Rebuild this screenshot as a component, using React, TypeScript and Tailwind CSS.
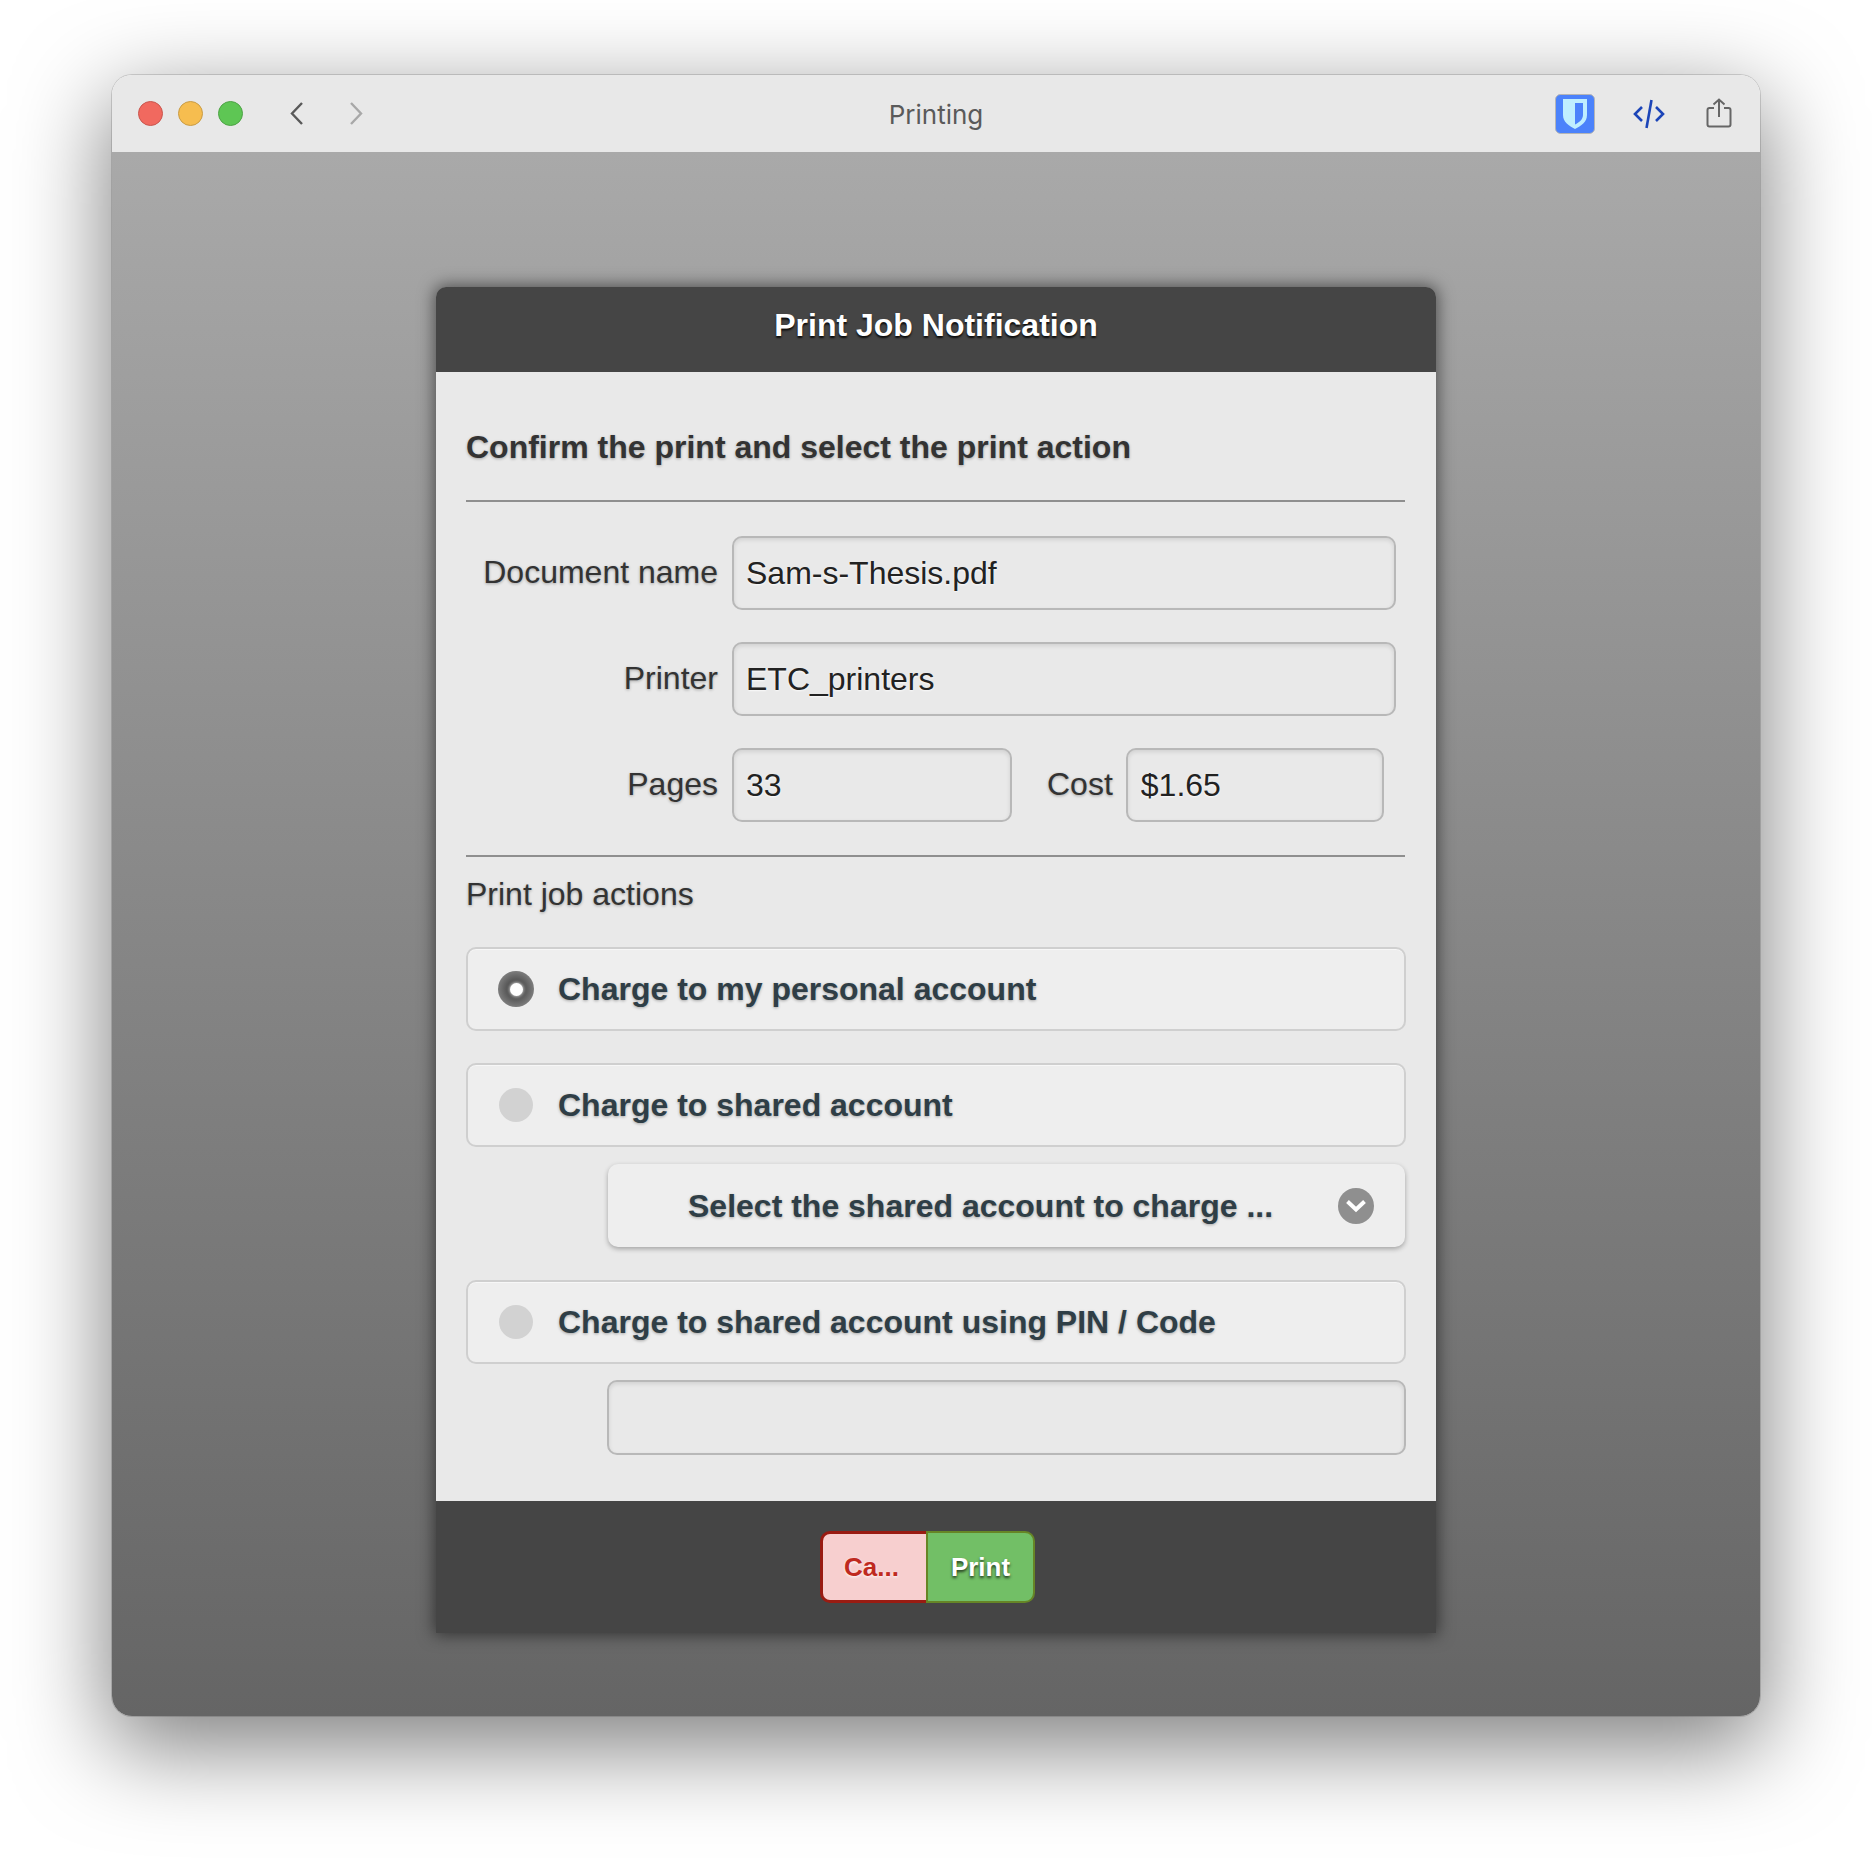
const fieldClass =
  "rounded-[10px] border-2 border-[#b8b8b8] bg-[#e9e9e9] px-3 text-[32px] text-[#222] shadow-[inset_0_2px_4px_rgba(0,0,0,0.1)] outline-none [text-shadow:0_1px_2px_rgba(255,255,255,0.8)]";

const labelShadow = "[text-shadow:0_1px_3px_rgba(0,0,0,0.3)]";

const TrafficLight = ({ color, ring }: { color: string; ring: string }) => (
  <span className={`block h-[25px] w-[25px] rounded-full border ${color} ${ring}`} />
);

const Field = ({ label, value, className }: { label: string; value: string; className: string }) => (
  <input readOnly aria-label={label} value={value} className={`${fieldClass} h-[74px] ${className}`} />
);

const ActionRow = ({ label, checked }: { label: string; checked?: boolean }) => (
  <div className="flex h-[84px] items-center rounded-[10px] border-2 border-[#cfcfcf] bg-[#eeeeee] pl-[30px] shadow-[inset_0_1px_0_rgba(255,255,255,0.5)]">
    {checked ? (
      <span className="flex h-9 w-9 items-center justify-center rounded-full bg-[radial-gradient(circle,#505050_30%,#7c7c7c_70%)]">
        <span className="h-[13px] w-[13px] rounded-full bg-white shadow-[0_0_3px_1px_rgba(255,255,255,0.6)]" />
      </span>
    ) : (
      <span className="mx-px h-[34px] w-[34px] rounded-full bg-[#d2d2d2]" />
    )}
    <span className={`ml-6 text-[32px] font-bold text-[#2f3e46] ${labelShadow}`}>{label}</span>
  </div>
);

export default function App() {
  return (
    <div className="h-[1864px] w-full overflow-hidden bg-white pl-[112px] pt-[75px] font-['Liberation_Sans',Arial,sans-serif]">
      <div className="flex h-[1641px] w-[1648px] flex-col overflow-hidden rounded-[20px] shadow-[0_28px_92px_4px_rgba(0,0,0,0.5),0_0_0_1px_rgba(0,0,0,0.14)]">
        {/* Title bar */}
        <div className="relative flex h-[77px] shrink-0 items-center bg-[#e8e8e8] pl-[26px]">
          <div className="flex gap-[15px]">
            <TrafficLight color="bg-[#f1695f]" ring="border-[#c9564e]" />
            <TrafficLight color="bg-[#f6bd4f]" ring="border-[#c99c45]" />
            <TrafficLight color="bg-[#5ec654]" ring="border-[#4ea346]" />
          </div>
          <svg className="ml-11" width="22" height="26" viewBox="0 0 22 26" fill="none" stroke="#595959" strokeWidth="2.4">
            <path d="M15 2 L5 12.5 L15 23" />
          </svg>
          <svg className="ml-9" width="22" height="26" viewBox="0 0 22 26" fill="none" stroke="#a8a8a8" strokeWidth="2.4">
            <path d="M6 2 L16 12.5 L6 23" />
          </svg>
          <span className="absolute inset-x-0 top-6 text-center font-['Inter',sans-serif] text-[26px] leading-8 text-[#5a5a5a]">
            Printing
          </span>
          <div className="ml-auto flex items-center">
            <svg width="40" height="40" viewBox="0 0 40 40">
              <rect x="0.5" y="0.5" width="39" height="39" rx="5" fill="#4b82fb" stroke="#b5b5b5" />
              <path d="M8 5 H32 V21 C32 28 26 32 20 35 C14 32 8 28 8 21 Z" fill="#bfeeff" />
              <path d="M20 9 H28 V21 C28 25.5 24 28.5 20 30.5 Z" fill="#4b82fb" />
            </svg>
            <svg className="ml-[38px]" width="32" height="30" viewBox="0 0 32 30" fill="none" stroke="#1c45b8" strokeWidth="2.6">
              <path d="M9 8 L2 15 L9 22" />
              <path d="M23 8 L30 15 L23 22" />
              <path d="M18.5 1 L13.5 29" />
            </svg>
            <svg className="-mt-0.5 ml-[41px] mr-7" width="26" height="30" viewBox="0 0 26 30" fill="none" stroke="#666" strokeWidth="2">
              <path d="M8 10 H3.5 A2 2 0 0 0 1.5 12 V26.5 A2 2 0 0 0 3.500 28.500 H22.500 A2 2 0 0 0 24.500 26.500 V12 A2 2 0 0 0 22.500 10 H18" />
              <path d="M13 19 V1.500" />
              <path d="M7.500 6.500 L13 1.500 L18.500 6.500" />
            </svg>
          </div>
        </div>

        {/* Page behind the modal */}
        <div className="flex grow justify-center bg-gradient-to-b from-[#a9a9a9] to-[#656565] pt-[135px]">
          <div className="flex h-[1346px] w-[1000px] flex-col rounded-t-[10px] shadow-[0_0_16px_2px_rgba(0,0,0,0.5)]">
            <div className="flex h-[85px] shrink-0 items-center justify-center rounded-t-[10px] bg-[#454545] pb-2.5 text-[32px] font-bold text-white [text-shadow:0_2px_2px_rgba(0,0,0,0.85)]">
              Print Job Notification
            </div>

            <div className="flex h-[1129px] shrink-0 flex-col bg-[#e9e9e9] px-[30px] pt-[55px]">
              <h1 className={`text-[32px] font-bold leading-10 text-[#333] ${labelShadow}`}>
                Confirm the print and select the print action
              </h1>
              <hr className="mr-px mt-[33px] border-t-2 border-[#8f8f8f]" />

              <div className="mt-[34px] flex items-center">
                <label className={`mb-0.5 mr-3.5 w-[252px] text-right text-[32px] text-[#333] ${labelShadow}`}>Document name</label>
                <Field label="Document name" value="Sam-s-Thesis.pdf" className="w-[664px]" />
              </div>
              <div className="mt-8 flex items-center">
                <label className={`mb-0.5 mr-3.5 w-[252px] text-right text-[32px] text-[#333] ${labelShadow}`}>Printer</label>
                <Field label="Printer" value="ETC_printers" className="w-[664px]" />
              </div>
              <div className="mt-8 flex items-center">
                <label className={`mb-0.5 mr-3.5 w-[252px] text-right text-[32px] text-[#333] ${labelShadow}`}>Pages</label>
                <Field label="Pages" value="33" className="w-[280px]" />
                <label className={`mb-0.5 ml-[35px] mr-[13px] text-[32px] text-[#333] ${labelShadow}`}>Cost</label>
                <Field label="Cost" value="$1.65" className="w-[258px] pl-[13px]" />
              </div>
              <hr className="mr-px mt-[33px] border-t-2 border-[#8f8f8f]" />

              <p className={`mt-[17px] text-[32px] leading-10 text-[#333] ${labelShadow}`}>Print job actions</p>

              <div className="mt-[33px]">
                <ActionRow label="Charge to my personal account" checked />
              </div>
              <div className="mt-8">
                <ActionRow label="Charge to shared account" />
              </div>
              <div className="ml-[142px] mr-px mt-[17px] flex h-[83px] items-center rounded-[10px] bg-[#eeeeee] pl-20 pr-[31px] shadow-[0_2px_5px_rgba(0,0,0,0.3)]">
                <span className={`text-[32px] font-bold text-[#2f3e46] ${labelShadow}`}>Select the shared account to charge ...</span>
                <span className="ml-auto flex h-9 w-9 items-center justify-center rounded-full bg-[#8f8f8f]">
                  <svg width="22" height="14" viewBox="0 0 22 14" fill="none" stroke="white" strokeWidth="4">
                    <path d="M2.500 2.500 L11 10.500 L19.500 2.500" />
                  </svg>
                </span>
              </div>
              <div className="mt-[33px]">
                <ActionRow label="Charge to shared account using PIN / Code" />
              </div>
              <input readOnly aria-label="PIN / Code" className={`${fieldClass} ml-[141px] mt-4 h-[75px] w-[799px]`} />
            </div>

            <div className="flex h-[132px] shrink-0 items-center justify-center bg-[#454545]">
              <div className="mr-[17px] flex h-[72px] w-[215px]">
                <button className="w-[106px] rounded-l-[10px] border-[3px] border-r-0 border-[#991b12] bg-[#f7cfcf] pr-1.5 text-[26px] font-bold text-[#bf2a1f] [text-shadow:0_1px_3px_rgba(255,255,255,0.9)]">
                  Ca...
                </button>
                <button className="w-[109px] rounded-r-[10px] border-2 border-[#668526] bg-[#72bf66] text-[26px] font-bold text-white [text-shadow:0_2px_3px_rgba(0,0,0,0.7)]">
                  Print
                </button>
              </div>
            </div>
          </div>
        </div>
      </div>
    </div>
  );
}
